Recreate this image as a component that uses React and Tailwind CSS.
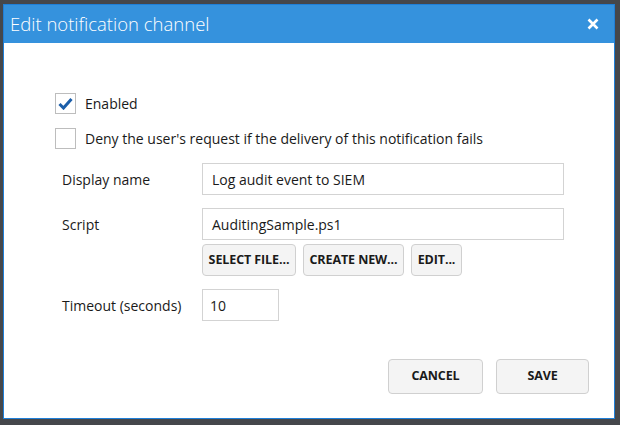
import React from 'react'

const FONT = { fontFamily: "'Open Sans', 'Noto Sans', sans-serif" }

function Checkbox({ checked, label }) {
  return (
    <label className="flex items-center h-[21px] gap-[9px] text-[14px] text-[#1a1a1a]">
      <span className="w-[21px] h-[21px] border border-[#bdbdbd] bg-white flex items-center justify-center">
        {checked && (
          <svg width="15" height="13" viewBox="0 0 15 13">
            <path d="M1.5 7 L5.5 11 L13.5 2" fill="none" stroke="#1b5ea9" strokeWidth="3" strokeLinejoin="miter" />
          </svg>
        )}
      </span>
      <span>{label}</span>
    </label>
  )
}

function Btn({ children, className }) {
  return (
    <button className={`h-[32px] rounded-[4px] border border-[#d0d0d0] bg-[#f4f4f4] text-[12.5px] font-bold text-[#1a1a1a] tracking-[-0.1px] ${className}`}>
      {children}
    </button>
  )
}

export default function App() {
  return (
    <div className="w-[620px] h-[425px] bg-[#45474b] overflow-hidden pl-[3px] pt-[4px]" style={FONT}>
      <div className="w-[612px] h-[415px] border border-[#1f7fd8] bg-white flex flex-col">
        {/* Header */}
        <div className="h-[38px] bg-[#3592dd] flex items-center justify-between pl-[6px] pr-[15px]">
          <h1 className="text-[18.5px] font-light text-white">Edit notification channel</h1>
          <svg width="12" height="12" viewBox="0 0 12 12">
            <path d="M1.5 1.5 L10.5 10.5 M10.5 1.5 L1.5 10.5" stroke="#ffffff" strokeWidth="2.6" />
          </svg>
        </div>

        {/* Body */}
        <div className="flex-1 flex flex-col pl-[51px] pt-[50px]">
          <div className="flex flex-col gap-[14px]">
            <Checkbox checked label="Enabled" />
            <Checkbox label="Deny the user's request if the delivery of this notification fails" />
          </div>

          <div className="mt-[14px] pl-[7px] grid grid-cols-[140px_362px] items-start text-[14px] text-[#1a1a1a]">
            <div className="h-[32px] flex items-center">Display name</div>
            <div className="h-[32px] border border-[#d3d3d3] flex items-center px-[9px]">Log audit event to SIEM</div>

            <div className="h-[32px] mt-[13px] flex items-center">Script</div>
            <div className="mt-[13px]">
              <div className="h-[32px] border border-[#d3d3d3] flex items-center px-[9px]">AuditingSample.ps1</div>
              <div className="mt-[4px] flex gap-[7px]">
                <Btn className="w-[94px]">SELECT FILE...</Btn>
                <Btn className="w-[101px]">CREATE NEW...</Btn>
                <Btn className="w-[51px]">EDIT...</Btn>
              </div>
            </div>

            <div className="h-[32px] mt-[13px] flex items-center">Timeout (seconds)</div>
            <div className="mt-[13px]">
              <div className="w-[77px] h-[32px] border border-[#d3d3d3] flex items-center px-[7px]">10</div>
            </div>
          </div>

          <div className="mt-auto mb-[24px] flex justify-end gap-[13px] pr-[25px]">
            <Btn className="w-[95px] h-[35px]">CANCEL</Btn>
            <Btn className="w-[93px] h-[35px]">SAVE</Btn>
          </div>
        </div>
      </div>
    </div>
  )
}
